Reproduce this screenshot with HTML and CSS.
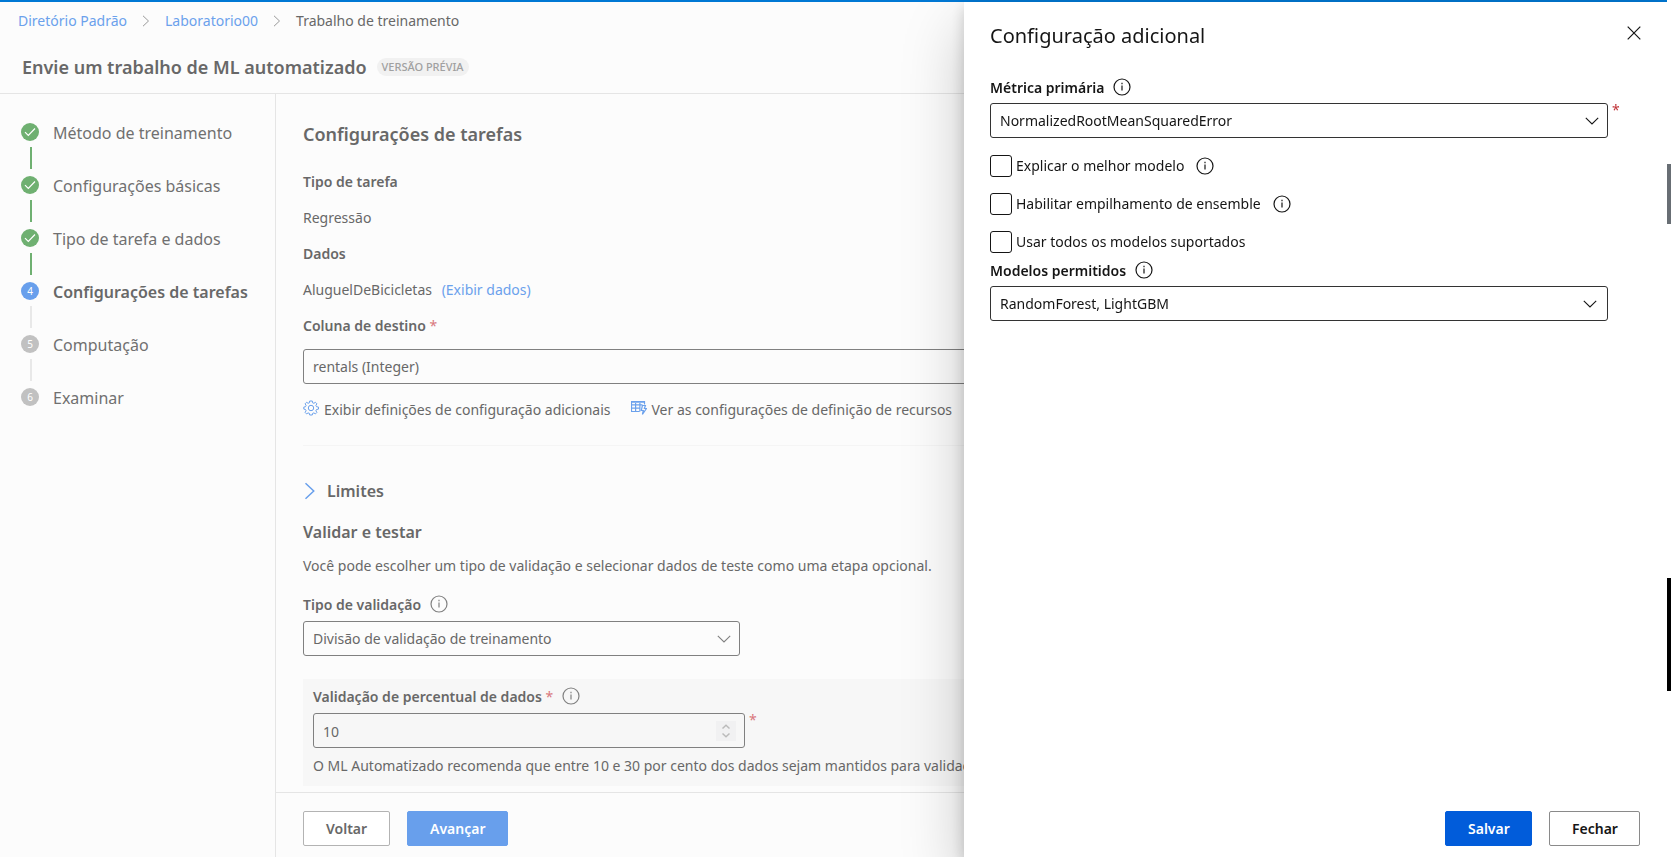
FILE: index.html
```html
<!DOCTYPE html>
<html lang="pt-BR">
<head>
<meta charset="utf-8">
<title>Envie um trabalho de ML automatizado</title>
<meta name="viewport" content="width=device-width, initial-scale=1">
<link rel="stylesheet" href="styles.css">
</head>
<body>
<svg class="defs" aria-hidden="true">
  <symbol id="info" viewBox="0 0 18 18"><circle cx="9" cy="9" r="8" fill="none" stroke="currentColor" stroke-width="1.2"/><path d="M9 7.5v5M9 4.8v1.5" stroke="currentColor" stroke-width="1.2"/></symbol>
  <symbol id="down" viewBox="0 0 14 8"><path d="M.8 .8 7 7 13.2 .8" fill="none" stroke="currentColor" stroke-width="1.1"/></symbol>
  <symbol id="check" viewBox="0 0 12 10"><path d="M1 5.2 4.3 8.5 11 1.5" fill="none" stroke="currentColor" stroke-width="1.2"/></symbol>
  <symbol id="next" viewBox="0 0 8 12"><path d="M1 .8 6.5 6 1 11.2" fill="none" stroke="currentColor" stroke-width="1"/></symbol>
</svg>
<div class="app">
  <header class="header">
    <nav class="crumbs" aria-label="Navegação">
      <a href="#">Diretório Padrão</a>
      <svg class="crumb-sep"><use href="#next"/></svg>
      <a href="#">Laboratorio00</a>
      <svg class="crumb-sep"><use href="#next"/></svg>
      <span>Trabalho de treinamento</span>
    </nav>
    <div class="title-row">
      <h1>Envie um trabalho de ML automatizado</h1>
      <span class="badge">VERSÃO PRÉVIA</span>
    </div>
  </header>
  <div class="body">
    <ol class="steps">
      <li class="step done"><span class="dot"><svg><use href="#check"/></svg></span><span>Método de treinamento</span></li>
      <li class="step done"><span class="dot"><svg><use href="#check"/></svg></span><span>Configurações básicas</span></li>
      <li class="step done"><span class="dot"><svg><use href="#check"/></svg></span><span>Tipo de tarefa e dados</span></li>
      <li class="step current"><span class="dot">4</span><span>Configurações de tarefas</span></li>
      <li class="step"><span class="dot">5</span><span>Computação</span></li>
      <li class="step"><span class="dot">6</span><span>Examinar</span></li>
    </ol>
    <main class="main">
      <div class="content">
        <h2>Configurações de tarefas</h2>
        <dl class="facts">
          <dt>Tipo de tarefa</dt>
          <dd>Regressão</dd>
          <dt>Dados</dt>
          <dd>AluguelDeBicicletas <a class="view-data" href="#">(Exibir dados)</a></dd>
        </dl>
        <label class="label target-label" for="target">Coluna de destino <span class="req">*</span></label>
        <div class="field">
          <select id="target"><option>rentals (Integer)</option></select>
          <svg class="caret"><use href="#down"/></svg>
        </div>
        <div class="actions">
          <button class="link-btn" type="button">
            <svg viewBox="0 0 16 16" fill="none" stroke="currentColor"><path d="M6.7 1h2.6l.3 1.8 1.3.5 1.5-1 1.5 1.5-1 1.6.6 1.3 2 .4v2l-2 .4-.6 1.3 1 1.6-1.5 1.5-1.5-1-1.3.5L9.3 15H6.7l-.3-1.6-1.3-.5-1.5 1-1.5-1.5 1-1.6-.6-1.3-1.7-.4v-2l1.7-.4.6-1.3-1-1.6 1.5-1.5 1.5 1 1.3-.5z"/><circle cx="8" cy="8" r="2.7"/></svg>
            Exibir definições de configuração adicionais
          </button>
          <button class="link-btn" type="button">
            <svg viewBox="0 0 16 16" fill="none" stroke="currentColor"><path d="M8.5 11.5h-8V1.5h13v3M.5 2.2h13M.5 4.9h11M.5 8.2h8.6M4.6 3v8.5M8.9 3v8.5" stroke-width="1.2"/><path d="M11.4 5.5h3l-1 3h2l-4 6 .9-4h-2z" fill="#fcfcfc" stroke-width="1.2"/></svg>
            Ver as configurações de definição de recursos
          </button>
        </div>
        <button class="limits" type="button"><svg><use href="#next"/></svg>Limites</button>
        <h3>Validar e testar</h3>
        <p class="intro">Você pode escolher um tipo de validação e selecionar dados de teste como uma etapa opcional.</p>
        <div class="label-row">
          <label class="label" for="valtype">Tipo de validação</label>
          <svg class="info"><use href="#info"/></svg>
        </div>
        <div class="field val-field">
          <select id="valtype"><option>Divisão de validação de treinamento</option></select>
          <svg class="caret"><use href="#down"/></svg>
        </div>
        <section class="percent">
          <div class="label-row">
            <label class="label" for="percent">Validação de percentual de dados <span class="req">*</span></label>
            <svg class="info"><use href="#info"/></svg>
          </div>
          <div class="required-row">
            <div class="field pct-field">
              <input id="percent" type="number" value="10">
              <svg class="spinner" viewBox="0 0 20 20" fill="none" stroke="currentColor" stroke-width="1.5"><path d="M6.5 7.5 10 4.2l3.5 3.3M6.5 12.5l3.5 3.3 3.5-3.3"/></svg>
            </div>
            <span class="req">*</span>
          </div>
          <p>O ML Automatizado recomenda que entre 10 e 30 por cento dos dados sejam mantidos para validação.</p>
        </section>
      </div>
      <footer class="footer">
        <button class="btn back" type="button">Voltar</button>
        <button class="btn forward" type="button">Avançar</button>
      </footer>
    </main>
  </div>
</div>
<aside class="drawer" aria-label="Configuração adicional">
  <div class="drawer-head">
    <h2>Configuração adicional</h2>
    <button class="close" type="button" aria-label="Fechar painel"><svg viewBox="0 0 14 14" fill="none" stroke="currentColor" stroke-width="1.2"><path d="m.7 .7 12.6 12.6M13.3 .7.7 13.3"/></svg></button>
  </div>
  <div class="drawer-body">
    <div class="label-row">
      <label class="label" for="metric">Métrica primária</label>
      <svg class="info"><use href="#info"/></svg>
    </div>
    <div class="required-row">
      <div class="field">
        <select id="metric"><option>NormalizedRootMeanSquaredError</option></select>
        <svg class="caret"><use href="#down"/></svg>
      </div>
      <span class="req">*</span>
    </div>
    <div class="checks">
      <div class="check"><input type="checkbox" id="explain"><label for="explain">Explicar o melhor modelo</label><svg class="info"><use href="#info"/></svg></div>
      <div class="check"><input type="checkbox" id="stack"><label for="stack">Habilitar empilhamento de ensemble</label><svg class="info"><use href="#info"/></svg></div>
      <div class="check"><input type="checkbox" id="all"><label for="all">Usar todos os modelos suportados</label></div>
    </div>
    <div class="label-row">
      <label class="label" for="models">Modelos permitidos</label>
      <svg class="info"><use href="#info"/></svg>
    </div>
    <div class="field models">
      <select id="models"><option>RandomForest, LightGBM</option></select>
      <svg class="caret"><use href="#down"/></svg>
    </div>
  </div>
  <div class="drawer-foot">
    <button class="btn save" type="button">Salvar</button>
    <button class="btn" type="button">Fechar</button>
  </div>
</aside>
<div class="rail"><span class="thumb page"></span><span class="thumb outer"></span></div>
</body>
</html>
```

FILE: styles.css
```css
* { box-sizing: border-box; }
body {
  margin: 0;
  height: 100vh;
  overflow: hidden;
  background: #fcfcfc;
  color: #686868;
  font: 14px/20px "Noto Sans", "Open Sans", sans-serif;
}
h1, h2, h3, p, ol, dl, dd { margin: 0; padding: 0; }
a { color: #6ba1ec; text-decoration: none; }
button, input, select { font: inherit; color: inherit; }
button { cursor: pointer; }
.defs { position: absolute; width: 0; height: 0; }

.app { height: 100vh; display: flex; flex-direction: column; border-top: 2px solid #0078d4; }
.header { height: 92px; border-bottom: 1px solid #e5e5e5; flex: none; }
.crumbs { display: flex; align-items: center; padding: 9px 18px 0; }
.crumb-sep { width: 8px; height: 12px; margin: 0 15px; color: #999; }
.title-row { display: flex; align-items: center; gap: 10px; padding: 22px 22px 0; }
h1 { font-size: 18px; line-height: 28px; font-weight: 600; }
.badge { padding: 0 5px; border-radius: 9px; background: #f1f1f1; color: #a0a0a0; font-size: 11px; line-height: 18px; font-weight: 500; }

.body { flex: 1; min-height: 0; display: flex; }
.steps { width: 276px; flex: none; border-right: 1px solid #e5e5e5; padding: 24px 21px; list-style: none; }
.step { display: flex; gap: 14px; height: 53px; font-size: 16px; line-height: 30px; color: #707070; white-space: nowrap; }
.dot { position: relative; flex: none; display: grid; place-items: center; width: 18px; height: 18px; margin-top: 5px; border-radius: 50%; background: #c1c1c1; color: #fff; font-size: 10px; line-height: 18px; }
.dot svg { width: 12px; height: 10px; }
.step:not(:last-child) .dot::after { content: ""; position: absolute; top: 24px; left: 9px; width: 2px; height: 22px; background: #e8e8e8; }
.done .dot { background: #6fb071; }
.step.done .dot::after { background: #6fb071; }
.current { font-weight: 600; color: #686868; }
.current .dot { background: #689fec; font-weight: 400; }

.main { flex: 1; min-width: 0; display: flex; flex-direction: column; }
.content { flex: 1; min-height: 0; overflow: hidden; padding: 26px 27px 0; }
.content h2 { font-size: 18px; line-height: 28px; font-weight: 600; margin-bottom: 16px; }
.facts { line-height: 36px; }
.facts dt { font-weight: 600; }
.view-data { margin-left: 6px; }
.label { font-weight: 600; }
.req { color: #d9787c; font-weight: 400; }
.target-label { display: block; line-height: 36px; margin-bottom: 5px; }
.field { position: relative; flex: 1; min-width: 0; color: inherit; }
.field select, .field input { display: block; width: 100%; height: 35px; padding: 1px 9px 0; border: 1px solid #808080; border-radius: 3px; background: none; appearance: none; }
.caret { position: absolute; top: 14px; right: 9px; width: 14px; height: 8px; pointer-events: none; }
.content .caret, .content .info { color: #808080; }
.actions { display: flex; gap: 20px; padding: 15px 0 24px; border-bottom: 1px solid #f5f5f5; }
.link-btn { display: flex; align-items: center; gap: 5px; padding: 0; border: 0; background: none; line-height: 22px; white-space: nowrap; }
.link-btn svg { width: 16px; height: 16px; margin-bottom: 4px; color: #6ba1ec; }
.limits { display: flex; align-items: center; gap: 11px; padding: 0 0 0 1px; margin: 32px 0 15px; border: 0; background: none; font-size: 16px; line-height: 26px; font-weight: 600; }
.limits svg { width: 12px; height: 18px; color: #689fec; }
h3 { font-size: 16px; line-height: 26px; font-weight: 600; margin-bottom: 11px; }
.intro { white-space: nowrap; margin-bottom: 19px; }
.label-row { display: flex; align-items: center; gap: 9px; height: 20px; margin-bottom: 6px; }
.info { width: 18px; height: 18px; margin-bottom: 3px; }
.val-field { width: 437px; }
.percent { margin-top: 23px; padding: 8px 10px; height: 107px; background: #f7f7f7; white-space: nowrap; }
.required-row { display: flex; align-items: flex-start; gap: 4px; }
.required-row > .req { width: 9px; line-height: 14px; }
.pct-field { flex: none; width: 432px; }
.field input::-webkit-inner-spin-button { appearance: none; }
.spinner { position: absolute; top: 8px; right: 9px; width: 20px; height: 20px; background: #f1f1f2; color: #bbb; }
.percent p { margin-top: 8px; }

.footer { flex: none; display: flex; gap: 17px; padding: 18px 27px 11px; border-top: 1px solid #e5e5e5; }
.btn { height: 35px; padding: 0 22px; border: 1px solid #8a8a8a; border-radius: 2px; background: #fff; font-weight: 600; }
.back { width: 87px; border-color: #b3b3b3; }
.forward { width: 101px; border-color: #689fec; background: #689fec; color: #fff; }

.drawer { position: fixed; top: 2px; right: 4px; bottom: 0; width: 703px; display: flex; flex-direction: column; background: #fff; color: #151515; box-shadow: 0 26px 58px rgba(0, 0, 0, .22), 0 5px 14px rgba(0, 0, 0, .18); }
.drawer-head { display: flex; justify-content: space-between; padding: 20px 26px 0; }
.drawer h2 { font-size: 20px; line-height: 28px; font-weight: 400; }
.close { width: 14px; height: 14px; padding: 0; margin-top: 4px; border: 0; background: none; }
.close svg { display: block; width: 14px; height: 14px; }
.drawer-body { flex: 1; padding: 28px 26px 0; }
.drawer .label-row { margin-bottom: 5px; }
.drawer .required-row { padding-right: 20px; }
.drawer .field select { border-color: #333; }
.drawer .req { color: #c03338; }
.models { margin-right: 33px; }
.models .caret { right: 11px; }
.checks { display: grid; gap: 16px; margin: 17px 0 8px; }
.check { display: flex; align-items: center; height: 22px; }
.check input { appearance: none; width: 22px; height: 22px; margin: 0 4px 0 0; border: 1px solid #151515; border-radius: 3px; }
.check .info { margin: 0 0 0 12px; }
.drawer-foot { display: flex; justify-content: flex-end; gap: 17px; padding: 0 27px 11px; }
.drawer-foot .btn { width: 91px; color: #151515; }
.drawer-foot .save { width: 87px; border-color: #015cda; background: #015cda; color: #fff; }

.rail { position: fixed; top: 0; right: 0; bottom: 0; width: 4px; background: #fff; }
.thumb { position: absolute; left: 0; width: 4px; }
.thumb.page { top: 164px; height: 60px; background: #686e74; }
.thumb.outer { top: 578px; height: 113px; background: #000; }
```
